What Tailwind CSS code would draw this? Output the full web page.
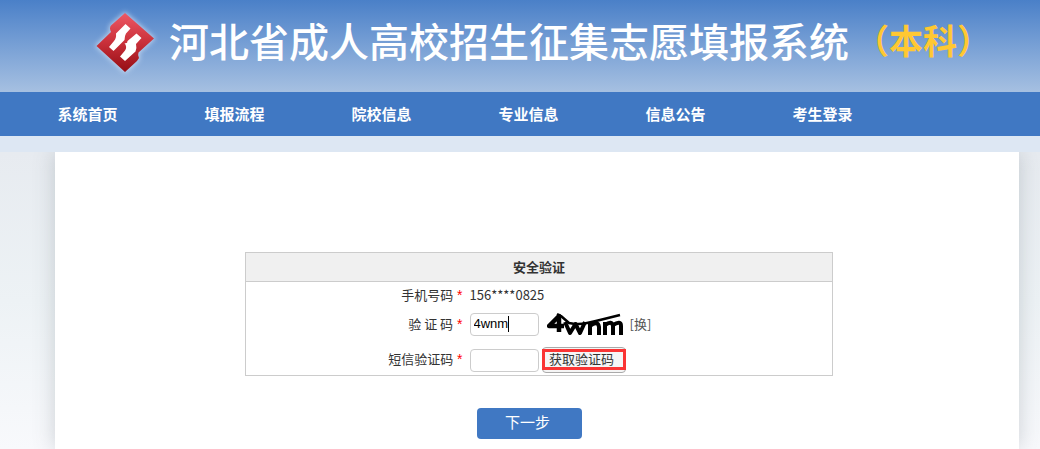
<!DOCTYPE html>
<html lang="zh-CN">
<head>
<meta charset="utf-8">
<meta name="viewport" content="width=device-width, initial-scale=1">
<title>河北省成人高校招生征集志愿填报系统</title>
<script src="https://cdn.jsdelivr.net/npm/@tailwindcss/browser@4"></script>
</head>
<body class="flex min-h-screen flex-col bg-[#dde7f3] font-['Noto_Sans_CJK_SC',sans-serif] text-[13px] text-[#333]">
<header class="flex h-[92px] items-start bg-linear-to-b from-[#4a80c8] to-[#a6c0e1] pt-[5px] pl-[85px] whitespace-nowrap">
  <svg class="size-20 shrink-0" viewBox="0 0 80 80" aria-hidden="true">
    <defs>
      <linearGradient id="red" x1="0" y1="0" x2="0" y2="1"><stop offset="0" stop-color="#ee5965"/><stop offset=".5" stop-color="#c9303a"/><stop offset="1" stop-color="#950d14"/></linearGradient>
      <filter id="glow" x="-20%" y="-20%" width="140%" height="140%"><feGaussianBlur stdDeviation="2.5"/></filter>
    </defs>
    <path d="M40 8 L69 33.500 L53.500 47.500 Q52.500 50 54 53 L52 56 L40 67 L11.500 41 L26 27 Q24 23 26 20.500Z" fill="#dce9f8" stroke="#dce9f8" stroke-width="2" filter="url(#glow)" opacity=".7"/>
    <path d="M40 8 L69 33.500 L53.500 47.500 Q52.500 50 54 53 L52 56 L40 67 L11.500 41 L26 27 Q24 23 26 20.500Z" fill="url(#red)"/>
    <path d="M40.500 19 L45.500 23.500 L41 28.500 Q39.500 31 39.500 35 L28.500 46 L24 42 L29 36 Q31.500 33 31 28.500Z" fill="#fff"/>
    <path d="M51.500 28.500 L56.500 33 L51 39 Q52 43 50.500 46.500 L40 56 L35 51.500 L40 45.500 Q42.500 42 39.500 38 Q42.500 39 42.500 36Z" fill="#fff"/>
  </svg>
  <h1 class="flex items-center pt-[7px] pl-1">
    <span class="text-[40px] leading-[56px] font-medium text-white">河北省成人高校招生征集志愿填报系统</span>
    <span class="pl-1.5 text-[34px] leading-[56px] font-bold text-[#ffc832]">（本科）</span>
  </h1>
</header>
<nav class="flex h-11 items-center bg-[#4078c3] pl-[14px] text-center text-[15px] font-bold text-white">
  <a href="#" class="w-[147px]">系统首页</a>
  <a href="#" class="w-[147px]">填报流程</a>
  <a href="#" class="w-[147px]">院校信息</a>
  <a href="#" class="w-[147px]">专业信息</a>
  <a href="#" class="w-[147px]">信息公告</a>
  <a href="#" class="w-[147px]">考生登录</a>
</nav>
<div class="mt-4 flex grow overflow-hidden bg-linear-to-b from-[#e7ebf0] via-[#edf2f5] to-[#f8f9fc] pr-[21px] pl-[55px]">
  <main class="flex grow flex-col items-center bg-white pt-[100px] pl-1 shadow-[0_0_20px_rgba(80,90,100,0.25)]">
    <form class="flex flex-col items-center">
      <table class="w-[588px] border-collapse border border-[#ccc]">
        <thead>
          <tr class="h-[29px] border-b border-[#ccc] bg-[#f0f0f0]"><th colspan="2" class="p-0 leading-4 font-bold">安全验证</th></tr>
        </thead>
        <tbody>
          <tr class="h-[27px]">
            <td class="w-[217px] p-0 text-right leading-5">手机号码 <span class="ml-px font-['Liberation_Sans',sans-serif] text-[14px] text-[#f00]">*</span></td>
            <td class="p-0 pl-1"><div class="pl-[3px] leading-5">156****0825</div></td>
          </tr>
          <tr class="h-[31px]">
            <td class="p-0 text-right leading-5"><label for="code">验 证 码 <span class="ml-px font-['Liberation_Sans',sans-serif] text-[14px] text-[#f00]">*</span></label></td>
            <td class="p-0 pl-1">
              <div class="flex items-center pl-[3px]">
                <div class="flex h-[23px] w-[69px] items-center rounded border border-[#ccc] bg-white pl-[3px]">
                  <input id="code" value="4wnm" class="w-[35px] border-r border-black font-['Liberation_Sans',sans-serif] leading-4 text-black outline-none">
                </div>
                <svg class="ml-2 h-[26px] w-[79px]" viewBox="0 0 79 26" role="img" aria-label="验证码图片">
                  <g fill="none" stroke="#000" stroke-width="4" stroke-linejoin="round">
                    <path d="M12 21 V5 L2 15 H17" stroke-width="4.500"/>
                    <path d="M18 11 L23 22 L28.500 13 L33 22 L38 11"/>
                    <path d="M43 24 V11 M43 15 Q51 9 52 16 V24"/>
                    <path d="M58 24 V11 M58 14 Q65 9 66 15 V24 M66 14 Q74 9 74 15 V24"/>
                    <path d="M10 3 L14 5 L22 12 Q31 14 40 12 T57 8 L73 4" stroke-width="2.500"/>
                  </g>
                </svg>
                <a href="#" class="ml-1 text-[#555]">[换]</a>
              </div>
            </td>
          </tr>
          <tr class="h-[36px]">
            <td class="p-0 pt-1 text-right leading-5"><label for="sms">短信验证码 <span class="ml-px font-['Liberation_Sans',sans-serif] text-[14px] text-[#f00]">*</span></label></td>
            <td class="p-0 pl-1">
              <div class="flex items-center pt-1.5 pl-[3px]">
                <input id="sms" class="h-[23px] w-[69px] rounded border border-[#ccc] bg-white px-1 outline-none">
                <button type="button" class="relative ml-[3px] h-[26px] w-[84px] rounded border border-[#aaa] bg-[#f5f5f5] pr-1 pb-0.5 leading-5">获取验证码<span class="absolute -inset-x-px top-px h-[21px] border-3 border-[#fa3434]"></span></button>
              </div>
            </td>
          </tr>
        </tbody>
      </table>
      <button type="submit" class="mt-8 mr-[19px] h-[31px] w-[105px] rounded bg-[#4078c3] pr-1 pb-1 text-[15px] leading-[22px] text-white">下一步</button>
    </form>
  </main>
</div>
</body>
</html>
